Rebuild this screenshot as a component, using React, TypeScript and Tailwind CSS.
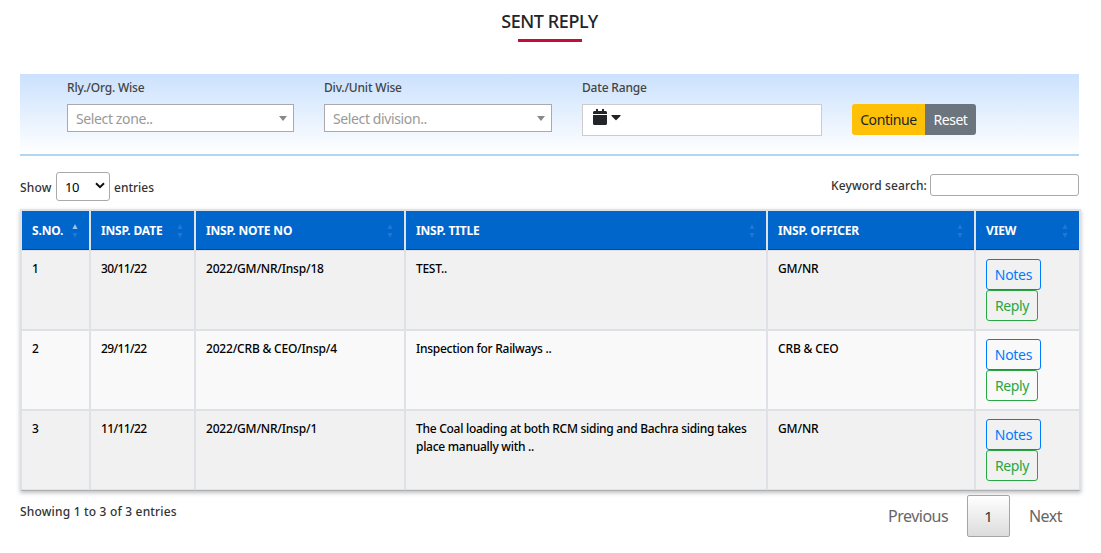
import React from "react";

const columns = [
  { label: "S.NO.", sorted: true },
  { label: "INSP. DATE" },
  { label: "INSP. NOTE NO" },
  { label: "INSP. TITLE" },
  { label: "INSP. OFFICER" },
  { label: "VIEW" },
];

const rows = [
  ["1", "30/11/22", "2022/GM/NR/Insp/18", "TEST..", "GM/NR"],
  ["2", "29/11/22", "2022/CRB & CEO/Insp/4", "Inspection for Railways ..", "CRB & CEO"],
  ["3", "11/11/22", "2022/GM/NR/Insp/1", "The Coal loading at both RCM siding and Bachra siding takes place manually with ..", "GM/NR"],
];

const cellTracking = [
  "",
  "tracking-[-0.6px]",
  "tracking-[-0.2px]",
  "tracking-[-0.28px]",
  "tracking-[-0.15px]",
];

const gridCols = "grid grid-cols-[67px_103px_208px_360px_206px_103px] gap-x-[2px]";

function SortArrows({ sorted }: { sorted?: boolean }) {
  return (
    <svg width="6" height="14" viewBox="0 0 6 14" className="mt-[13px] shrink-0">
      <path d="M3 0L5.6 5H0.4Z" fill={sorted ? "#99c2eb" : "#1f78d2"} />
      <path d="M3 14L5.6 9H0.4Z" fill="#1f78d2" />
    </svg>
  );
}

function Picker({ text, width }: { text: string; width: string }) {
  return (
    <div className={"flex h-[28px] items-center justify-between border border-[#aaa] bg-white pl-2 pr-[6px] " + width}>
      <span className="pt-[2px] text-[14px] leading-[26px] tracking-[-0.38px] text-[#999]">{text}</span>
      <svg width="8" height="5" viewBox="0 0 8 5">
        <path d="M0 0H8L4 5Z" fill="#888" />
      </svg>
    </div>
  );
}

function Label({ children }: { children: string }) {
  return <div className="h-[30px] pt-[5px] text-[12px] font-medium leading-[18px] tracking-[-0.18px] text-[#444]">{children}</div>;
}

export default function App() {
  return (
    <div className="h-[553px] w-[1101px] overflow-hidden bg-white font-['Noto_Sans',sans-serif] text-[#333]">
      <header className="flex h-[74px] flex-col items-center pr-[2px] pt-[9px]">
        <h1 className="h-[30px] text-[18px] font-medium leading-[24px] tracking-[-0.4px] text-[#212529]">SENT REPLY</h1>
        <div className="ml-px h-[3px] w-[64px] bg-[#c20e3b]" />
      </header>

      <section className="ml-5 flex h-[82px] w-[1059px] border-b-2 border-[#b0d6f4] bg-linear-to-b from-[#cbe1fd] to-white pl-[47px]">
        <div className="mr-[30px]">
          <Label>Rly./Org. Wise</Label>
          <Picker text="Select zone.." width="w-[227px]" />
        </div>
        <div className="mr-[30px]">
          <Label>Div./Unit Wise</Label>
          <Picker text="Select division.." width="w-[228px]" />
        </div>
        <div className="mr-[30px]">
          <Label>Date Range</Label>
          <div className="flex h-[32px] w-[240px] gap-1 border border-[#ccc] bg-white pl-[10px] pt-1">
            <svg width="14" height="16" viewBox="0 0 448 512" fill="#212529">
              <path d="M12 192h424c6.600 0 12 5.400 12 12v260c0 26.500-21.500 48-48 48H48c-26.500 0-48-21.500-48-48V204c0-6.600 5.400-12 12-12zm436-44v-36c0-26.500-21.500-48-48-48h-48V12c0-6.600-5.400-12-12-12h-40c-6.600 0-12 5.400-12 12v52H160V12c0-6.600-5.400-12-12-12h-40c-6.600 0-12 5.400-12 12v52H48C21.500 64 0 85.500 0 112v36c0 6.600 5.400 12 12 12h424c6.600 0 12-5.400 12-12z" />
            </svg>
            <svg width="10" height="16" viewBox="0 0 320 512" fill="#212529">
              <path d="M31.300 192h257.300c17.800 0 26.700 21.500 14.100 34.100L174.100 354.800c-7.800 7.800-20.500 7.800-28.300 0L17.200 226.100C4.600 213.500 13.500 192 31.300 192z" />
            </svg>
          </div>
        </div>
        <div className="flex pt-[30px] text-[14px] leading-[31px]">
          <button className="h-[31px] w-[73px] rounded-l-[3px] bg-[#ffc107] text-center tracking-[-0.4px] text-[#212529]">Continue</button>
          <button className="h-[31px] w-[51px] rounded-r-[3px] bg-[#6c757d] text-center tracking-[-0.5px] text-white">Reset</button>
        </div>
      </section>

      <div className="ml-5 flex h-[53px] w-[1059px] justify-between text-[12px] font-medium leading-[18px]">
        <div className="flex items-start pt-4">
          <span className="w-[36px] pt-[7px] tracking-[0.2px]">Show</span>
          <div className="flex h-[29px] w-[54px] items-center justify-between rounded-[3px] border border-[#aaa] bg-white pl-2 pr-1 text-[13px] font-normal text-black">
            <span className="pt-px tracking-[-0.5px]">10</span>
            <svg width="10" height="7" viewBox="0 0 10 7" className="-mt-[2px]">
              <path d="M1 1.200L5 5.200L9 1.200" fill="none" stroke="#111" strokeWidth="2" />
            </svg>
          </div>
          <span className="pl-1 pt-[7px]">entries</span>
        </div>
        <div className="flex items-start pt-[18px]">
          <span className="mr-[3px] pt-[3px] tracking-[0.12px]">Keyword search:</span>
          <div className="h-[22px] w-[149px] rounded-[3px] border border-[#aaa] bg-white" />
        </div>
      </div>

      <div className="ml-5 w-[1061px] border-x-2 border-b border-t-2 border-[#dee2e6] border-b-[#aeb1b3] bg-[#dee2e6] pb-px shadow-[0_2px_4px_rgba(0,0,0,0.25)]">
        <div className={gridCols}>
          {columns.map((c) => (
            <div key={c.label} className="flex h-[39px] justify-between border-b border-[#004c99] bg-[#0066cc] pl-[10px] pr-[11px]">
              <span className="whitespace-nowrap text-[12px] font-bold leading-[39px] tracking-[-0.16px] text-white">{c.label}</span>
              <SortArrows sorted={c.sorted} />
            </div>
          ))}
        </div>
        <div className="mt-px flex flex-col gap-[2px]">
          {rows.map((r, i) => (
            <div key={r[0]} className={gridCols}>
              {r.map((t, j) => (
                <div key={j} className={"h-[78px] pl-[10px] pr-2 pt-[9px] text-[12px] font-medium leading-[18px] text-black " + cellTracking[j] + (i % 2 ? " bg-[#f9f9f9]" : " bg-[#f1f1f1]")}>
                  {t}
                </div>
              ))}
              <div className={"flex h-[78px] flex-col items-start pl-[10px] pt-2 text-[14px] leading-[29px] " + (i % 2 ? "bg-[#f9f9f9]" : "bg-[#f1f1f1]")}>
                <button className="h-[31px] w-[55px] rounded-[3px] border border-[#007bff] tracking-[-0.3px] text-[#007bff]">Notes</button>
                <button className="h-[31px] w-[52px] rounded-[3px] border border-[#28a745] tracking-[-0.35px] text-[#28a745]">Reply</button>
              </div>
            </div>
          ))}
        </div>
      </div>

      <footer className="ml-5 flex w-[1059px] justify-between">
        <div className="pt-[12px] text-[12px] font-medium leading-[18px] tracking-[0.18px]">Showing 1 to 3 of 3 entries</div>
        <div className="flex pt-[4px] text-[16px] leading-[43px] text-[#666]">
          <span className="w-[79px] tracking-[-0.5px]">Previous</span>
          <span className="h-[42px] w-[43px] rounded-[2px] border border-[#a5a5a5] bg-linear-to-b from-white to-[#dcdcdc] text-center text-[15px] leading-[41px] text-[#333]">1</span>
          <span className="w-[69px] pl-[19px] tracking-[-0.55px]">Next</span>
        </div>
      </footer>
    </div>
  );
}
